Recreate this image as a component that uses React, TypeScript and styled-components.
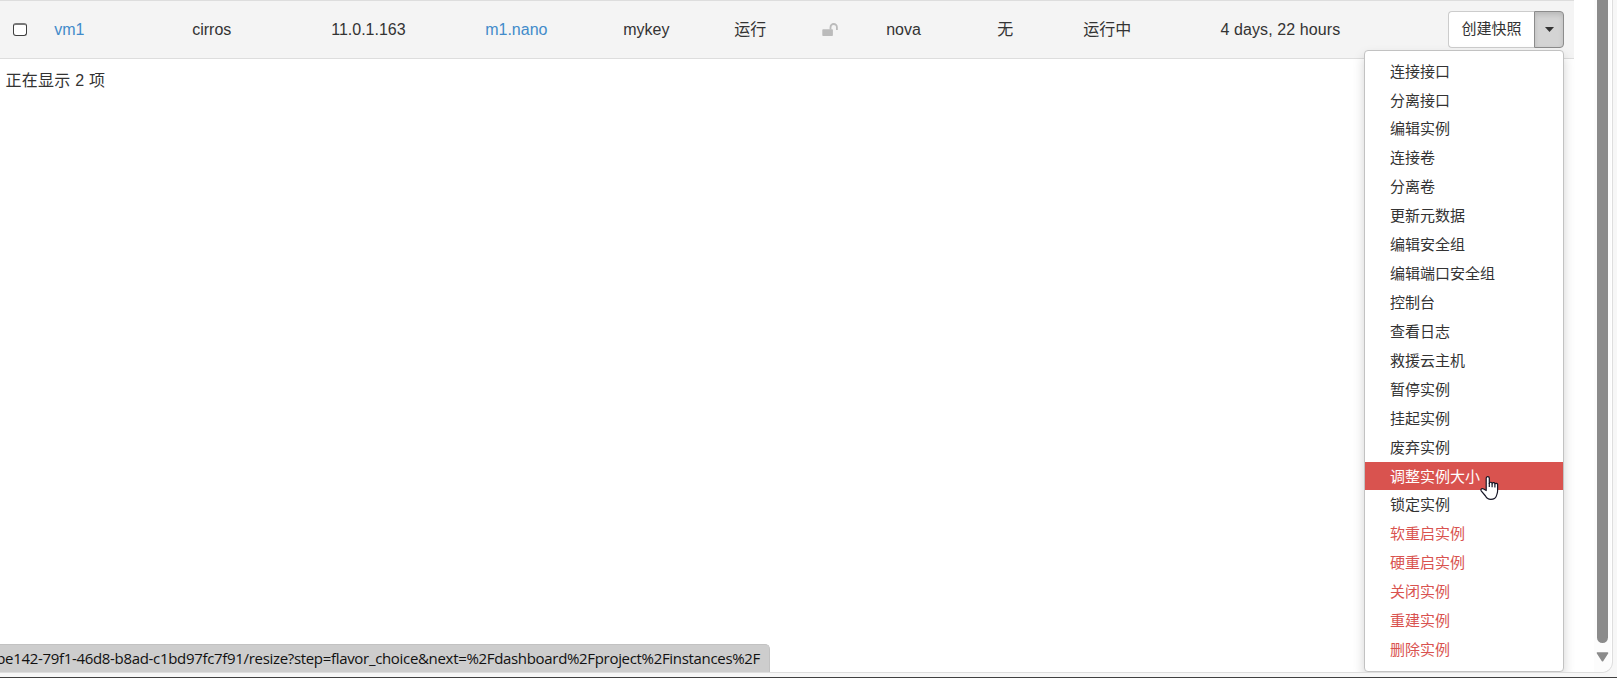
import React from 'react';
import styled, { createGlobalStyle, css } from 'styled-components';

const GlobalStyle = createGlobalStyle`
  * { box-sizing: border-box; }
  html, body { margin: 0; padding: 0; overflow: hidden; }
  body {
    background: #f7f7f7;
    color: #333;
    font: 16px/22px "Liberation Sans", Arial, "Noto Sans CJK SC", sans-serif;
  }
`;

const Window = styled.div`
  height: 678px;
  border-bottom: 1px solid #404040;
`;

const Viewport = styled.div`
  position: relative;
  display: flex;
  width: 1613px;
  height: 673px;
  background: #fff;
  border: solid #dedede;
  border-width: 0 1px 1px 0;
  border-radius: 0 0 11px 0;
  overflow: hidden;
`;

const Content = styled.main`
  width: 1574px;
`;

const InstanceRow = styled.div`
  display: grid;
  grid-template-columns: 46px 138px 139px 154px 138px 111px 88px 64px 111px 86px 137px 1fr;
  align-items: center;
  height: 59px;
  background: #f4f4f4;
  border: solid #ddd;
  border-width: 1px 0;
`;

const Cell = styled.div`
  padding-left: 8.2px;
  white-space: nowrap;
`;

const CheckCell = styled.div`
  display: flex;
  padding-left: 13px;
`;

const Checkbox = styled.span`
  width: 14px;
  height: 13px;
  background: #fff;
  border: 1px solid #3f3f3f;
  border-top: 2px solid #777;
  border-radius: 3px;
`;

const Link = styled.a`
  color: #428bca;
  text-decoration: none;
`;

const LastCell = styled.div`
  display: flex;
  align-items: center;
  justify-content: space-between;
  padding: 0 10px 0 8.4px;
`;

const Uptime = styled.span`
  letter-spacing: 0.1px;
`;

const ButtonGroup = styled.div`
  position: relative;
  display: flex;
  height: 37px;
`;

const SnapshotButton = styled.button`
  width: 86px;
  padding: 0 0 2px;
  border: 1px solid #ccc;
  border-right: 0;
  border-radius: 4px 0 0 4px;
  background: #fff;
  color: #333;
  font: inherit;
  font-size: 15px;
`;

const CaretButton = styled.button`
  display: flex;
  align-items: center;
  justify-content: center;
  width: 30px;
  padding: 0;
  border: 1px solid #8c8c8c;
  border-radius: 0 4px 4px 0;
  background: #d4d4d4;
  box-shadow: inset 0 3px 5px rgba(0, 0, 0, 0.125);
`;

const Menu = styled.ul`
  position: absolute;
  top: 39px;
  right: 0;
  width: 200px;
  margin: 0;
  padding: 5.6px 0 6.8px;
  list-style: none;
  background: #fff;
  border: 1px solid #c2c2c2;
  border-radius: 4px;
  box-shadow: 0 6px 12px rgba(0, 0, 0, 0.175);
  font-size: 15px;
`;

type Tone = 'plain' | 'danger' | 'active';

const MenuItem = styled.li<{ $tone: Tone }>`
  height: 28.93px;
  padding-left: 25px;
  line-height: 30px;
  white-space: nowrap;
  ${({ $tone }) => $tone === 'danger' && css`color: #d9534f;`}
  ${({ $tone }) => $tone === 'active' && css`color: #fff; background: #d9534f;`}
`;

const TableFooter = styled.div`
  padding: 11px 5.5px;
  letter-spacing: 0.25px;
`;

const Scrollbar = styled.div`
  display: flex;
  flex-direction: column;
  align-items: center;
  width: 17px;
  margin-left: 20px;
  background: #fcfcfc;
`;

const Thumb = styled.div`
  width: 11px;
  height: 643px;
  margin-bottom: 9px;
  background: #8b8b8b;
  border-radius: 0 0 6px 6px;
`;

const StatusBar = styled.div`
  position: absolute;
  left: 0;
  bottom: 0;
  display: flex;
  justify-content: flex-end;
  width: 770px;
  height: 28px;
  padding-right: 9px;
  overflow: hidden;
  background: #cdcdcd;
  border: solid #c2c2c2;
  border-width: 1px 1px 0 0;
  border-radius: 0 5px 0 0;
  color: #111;
  font: 15px/27px "Open Sans", "Noto Sans", sans-serif;
  letter-spacing: -0.32px;
  white-space: nowrap;
`;

const Pointer = styled.svg`
  position: absolute;
  left: 1480px;
  top: 475px;
`;

const items: [string, Tone][] = [
  ['连接接口', 'plain'],
  ['分离接口', 'plain'],
  ['编辑实例', 'plain'],
  ['连接卷', 'plain'],
  ['分离卷', 'plain'],
  ['更新元数据', 'plain'],
  ['编辑安全组', 'plain'],
  ['编辑端口安全组', 'plain'],
  ['控制台', 'plain'],
  ['查看日志', 'plain'],
  ['救援云主机', 'plain'],
  ['暂停实例', 'plain'],
  ['挂起实例', 'plain'],
  ['废弃实例', 'plain'],
  ['调整实例大小', 'active'],
  ['锁定实例', 'plain'],
  ['软重启实例', 'danger'],
  ['硬重启实例', 'danger'],
  ['关闭实例', 'danger'],
  ['重建实例', 'danger'],
  ['删除实例', 'danger'],
];

const LockSvg = styled.svg`
  display: block;
`;

const UnlockIcon = () => (
  <LockSvg width="16" height="14" viewBox="0 0 16 14">
    <path d="M8.5 6.5V4.2a3.2 3.2 0 0 1 6.4 0V7" fill="none" stroke="#bbb" strokeWidth="1.8" />
    <rect x="0.3" y="6.2" width="10.6" height="6.8" rx="0.8" fill="#bbb" />
  </LockSvg>
);

export default function App() {
  return (
    <Window>
      <GlobalStyle />
      <Viewport>
        <Content>
          <InstanceRow>
            <CheckCell><Checkbox /></CheckCell>
            <Cell><Link>vm1</Link></Cell>
            <Cell>cirros</Cell>
            <Cell>11.0.1.163</Cell>
            <Cell><Link>m1.nano</Link></Cell>
            <Cell>mykey</Cell>
            <Cell>运行</Cell>
            <Cell><UnlockIcon /></Cell>
            <Cell>nova</Cell>
            <Cell>无</Cell>
            <Cell>运行中</Cell>
            <LastCell>
              <Uptime>4 days, 22 hours</Uptime>
              <ButtonGroup>
                <SnapshotButton>创建快照</SnapshotButton>
                <CaretButton>
                  <svg width="9" height="5" viewBox="0 0 9 5">
                    <path d="M0 0h9L4.5 5z" fill="#333" />
                  </svg>
                </CaretButton>
                <Menu>
                  {items.map(([label, tone]) => (
                    <MenuItem key={label} $tone={tone}>{label}</MenuItem>
                  ))}
                </Menu>
              </ButtonGroup>
            </LastCell>
          </InstanceRow>
          <TableFooter>正在显示 2 项</TableFooter>
        </Content>
        <Scrollbar>
          <Thumb />
          <svg width="13" height="10" viewBox="0 0 13 10">
            <path d="M1.5 1h10L6.5 8.7z" fill="#8b8b8b" stroke="#8b8b8b" strokeWidth="1.6" strokeLinejoin="round" />
          </svg>
        </Scrollbar>
        <StatusBar>be142-79f1-46d8-b8ad-c1bd97fc7f91/resize?step=flavor_choice&amp;next=%2Fdashboard%2Fproject%2Finstances%2F</StatusBar>
        <Pointer width="19" height="26" viewBox="0 0 19 26">
          <path
            d="M6.2 15.5V3.2a1.55 1.55 0 0 1 3.1 0V8.5a1.4 1.4 0 0 1 2.8 .3a1.4 1.4 0 0 1 2.8 .6a1.4 1.4 0 0 1 2.7 .8V16c0 2.2-.8 3.4-1.3 5.2c-.6 2-3 3.2-5.5 3.2c-2.8 0-4.3-1.4-5.3-3.4L1.2 15.8c-.9-1.7 1.2-3 2.5-1.7z"
            fill="#fff" stroke="#161626" strokeWidth="1.2" strokeLinejoin="round"
          />
          <path d="M9.3 8v4M12.1 8.8v3.5M14.9 9.5v3" stroke="#161626" strokeWidth="1.2" />
        </Pointer>
      </Viewport>
    </Window>
  );
}
